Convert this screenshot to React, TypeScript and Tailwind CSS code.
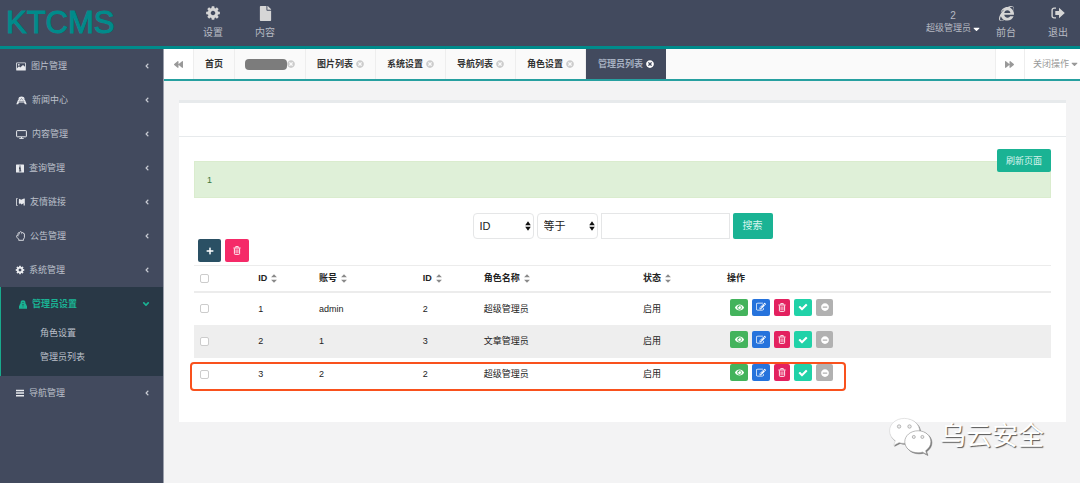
import React from "react";
import type { ReactNode } from "react";
import {
  FaAngleDown,
  FaAngleLeft,
  FaBackward,
  FaCaretDown,
  FaEye,
  FaFile,
  FaForward,
  FaInternetExplorer,
  FaMinusCircle,
  FaPlus,
  FaTimesCircle,
} from "react-icons/fa";

const COG =
  "M1152 896q0-106-75-181t-181-75-181 75-75 181 75 181 181 75 181-75 75-181zm512-109v222q0 12-8 23t-20 13l-185 28q-19 54-39 91 35 50 107 138 10 12 10 25t-9 23q-27 37-99 108t-94 71q-12 0-26-9l-138-108q-44 23-91 38-16 136-29 186-7 28-36 28h-222q-14 0-24.5-8.5t-11.5-21.5l-28-184q-49-16-90-37l-141 107q-10 9-25 9-14 0-25-11-126-114-165-168-7-10-7-23 0-12 8-23 15-21 51-66.5t54-70.5q-27-50-41-99l-183-27q-13-2-21-12.5t-8-23.5v-222q0-12 8-23t19-13l186-28q14-46 39-92-40-57-107-138-10-12-10-24 0-10 9-23 26-36 98.5-107.5t94.5-71.5q13 0 26 10l138 107q44-23 91-38 16-136 29-186 7-28 36-28h222q14 0 24.5 8.5t11.5 21.5l28 184q49 16 90 37l142-107q9-9 24-9 13 0 25 10 129 119 165 170 7 8 7 22 0 12-8 23-15 21-51 66.5t-54 70.5q26 50 41 98l183 28q13 2 21 12.5t8 23.5z";
const EDIT =
  "M888 1184l116-116-152-152-116 116v56h96v96h56zm440-720q-16-16-33 1l-350 350q-17 17-1 33t33-1l350-350q17-17 1-33zm80 594v190q0 119-84.5 203.5t-203.5 84.5h-832q-119 0-203.5-84.5t-84.500-203.5v-832q0-119 84.5-203.5t203.5-84.5h832q63 0 117 25 15 7 18 23 3 17-9 29l-49 49q-14 14-32 8-23-6-45-6h-832q-66 0-113 47t-47 113v832q0 66 47 113t113 47h832q66 0 113-47t47-113v-126q0-13 9-22l64-64q15-15 35-7t20 29zm-96-738l288 288-672 672h-288v-288zm444 132l-92 92-288-288 92-92q28-28 68-28t68 28l152 152q28 28 28 68t-28 68z";
const CHECK =
  "M1671 566q0 40-28 68l-724 724-136 136q-28 28-68 28t-68-28l-136-136-362-362q-28-28-28-68t28-68l136-136q28-28 68-28t68 28l294 295 656-657q28-28 68-28t68 28l136 136q28 28 28 68z";

function Glyph({ d, className }: { d: string; className: string }) {
  return (
    <svg viewBox="0 0 1792 1792" fill="currentColor" className={className} aria-hidden="true">
      <path d={d} />
    </svg>
  );
}

function SignOutIcon() {
  return (
    <svg viewBox="0 0 14 12" className="h-3 w-3.5" fill="none" aria-hidden="true">
      <path d="M5 1.100H3A1.900 1.900 0 0 0 1.100 3v6A1.900 1.900 0 0 0 3 10.900h2" stroke="currentColor" strokeWidth="1.400" />
      <path d="M4.300 4H8V.8L13.800 6 8 11.200V8H4.300z" fill="currentColor" />
    </svg>
  );
}

function TrashIcon() {
  return (
    <svg viewBox="0 0 8 9" className="h-[9px] w-2" aria-hidden="true">
      <path d="M2.700 1.600V.6h2.600v1M.4 2h7.200" fill="none" stroke="currentColor" strokeWidth=".9" />
      <path d="M1.400 2.400v5.200q0 .8.800.8h3.600q.8 0 .8-.8V2.400" fill="none" stroke="currentColor" strokeWidth=".9" />
      <path d="M3.100 3.400v3.800M4.900 3.400v3.800" stroke="currentColor" strokeWidth=".8" />
    </svg>
  );
}

function PictureIcon() {
  return (
    <svg viewBox="0 0 10 9" className="h-[9px] w-2.5" aria-hidden="true">
      <path fillRule="evenodd" fill="currentColor" d="M.8.500h8.400q.6 0 .6.600v6.800q0 .6-.6.600H.8q-.6 0-.6-.600V1.100Q.2.500.8.500zM1 1.300v4.900L3 4.300l1.200 1.100L7 2.900l2 1.900V1.300zM2.800 1.900a.9.900 0 1 1 0 1.800.9.900 0 0 1 0-1.800z" />
    </svg>
  );
}

function NewsIcon() {
  return (
    <svg viewBox="0 0 11 9" className="h-[9px] w-[11px]" aria-hidden="true">
      <path d="M3 1.300Q5.500-.4 8 1.300l1.200 3.200 1.500 3.700H8.900L8 6.600H3l-.9 1.600H.3l1.500-3.700z" fill="currentColor" />
      <path d="M4 4.400l1.500-2 1.500 2M2.700 5.400h5.600M2.300 3.800l.8-1M8.700 3.800l-.8-1" fill="none" stroke="#424a5e" strokeWidth=".5" />
    </svg>
  );
}

function ScreenIcon() {
  return (
    <svg viewBox="0 0 11 9" className="h-[9px] w-[11px]" fill="none" stroke="currentColor" aria-hidden="true">
      <rect x=".6" y=".6" width="9.800" height="6.200" rx=".6" />
      <path d="M5.500 7v1.200M3.300 8.400h4.400" />
    </svg>
  );
}

function InfoIcon() {
  return (
    <svg viewBox="0 0 8 9" className="h-[9px] w-2" aria-hidden="true">
      <rect y=".5" width="8" height="8" rx=".5" fill="currentColor" />
      <path d="M4 1.500v1.200M3 3.700h1.200v3.200M2.900 7h2.400" stroke="#424a5e" strokeWidth="1.100" />
    </svg>
  );
}

function LinkIcon() {
  return (
    <svg viewBox="0 0 9 8" className="h-2 w-[9px]" aria-hidden="true">
      <path d="M1.600.5H.5v7h1.100" fill="none" stroke="currentColor" strokeWidth=".8" />
      <path d="M3 .8l2.300 1L7.300.8l1.500-.4v7.100H7.600V5.300L5.400 6.400 3.900 5.100v1.400L2.800 5z" fill="currentColor" />
    </svg>
  );
}

function HandIcon() {
  return (
    <svg viewBox="0 0 9 10" className="h-2.5 w-[9px]" fill="none" stroke="currentColor" strokeWidth=".9" aria-hidden="true">
      <path d="M2.700 9.300V8.200L.9 6.300Q.4 5.600.6 4.800q.3-.8 1.500-.6V2.300q.2-.9 1.300-.7Q3.800.6 4.700.7q.8 0 1 .8 1-.3 1.300.6 1.300-.1 1.400.9v3.600L7.500 8.200v1.100z" />
      <path d="M2.100 4.200v1.300M3.400 1.800v1.600M5.700 1.600v1.600" strokeWidth=".6" />
    </svg>
  );
}

function AdminIcon() {
  return (
    <svg viewBox="0 0 8 9" className="h-[9px] w-2" fill="currentColor" aria-hidden="true">
      <path fillRule="evenodd" d="M4 .2c1.500 0 2.400.9 2.400 2v1.300l.8.600v1L8 6v2.700H0V6l.8-.9v-1l.8-.6V2.200c0-1.100.9-2 2.400-2zM3.200 2v.6h1.600V2zM3.100 4.600v.6h1.800v-.6zM3.700 6.500v.8h.6v-.8z" />
    </svg>
  );
}

function LinesIcon() {
  return (
    <svg viewBox="0 0 8 8" className="h-2 w-2" fill="currentColor" aria-hidden="true">
      <path d="M0 .7h8v1.500H0zM0 3.300h8v1.500H0zM0 5.900h8v1.500H0z" />
    </svg>
  );
}

function SortIcon() {
  return (
    <svg viewBox="0 0 6 9" className="h-[9px] w-1.5" fill="#8a8a8a" aria-hidden="true">
      <path d="M3 .2L5.900 3.300H.1zM3 8.800L.1 5.700h5.800z" />
    </svg>
  );
}

const menu: { label: string; icon: ReactNode }[] = [
  { label: "图片管理", icon: <PictureIcon /> },
  { label: "新闻中心", icon: <NewsIcon /> },
  { label: "内容管理", icon: <ScreenIcon /> },
  { label: "查询管理", icon: <InfoIcon /> },
  { label: "友情链接", icon: <LinkIcon /> },
  { label: "公告管理", icon: <HandIcon /> },
  { label: "系统管理", icon: <Glyph d={COG} className="-mx-px h-2.5 w-2.5" /> },
];

function MenuItem({ label, icon }: { label: string; icon: ReactNode }) {
  return (
    <a href="#" className="flex h-[34px] items-center gap-[5px] pr-3 pl-4 text-[#e8eaee]">
      {icon}
      <span className="flex-1 text-[#bcc0ca]">{label}</span>
      <FaAngleLeft className="h-2 w-2 text-[#c8cbd3]" />
    </a>
  );
}

function Sidebar() {
  return (
    <nav className="w-[164px] shrink-0 border-r border-[#9a9fab] bg-[#424a5e]">
      {menu.map((m) => (
        <MenuItem key={m.label} {...m} />
      ))}
      <div className="border-l border-[#19aa8d] bg-[#293846] pb-[7px]">
        <a href="#" className="flex h-[34px] items-center gap-[5px] pr-3 pl-[18px] text-[#1ab394]">
          <AdminIcon />
          <span className="flex-1 font-semibold">管理员设置</span>
          <FaAngleDown className="h-2.5 w-2.5" />
        </a>
        <a href="#" className="flex h-6 items-center pl-[39px] text-[#bcc0ca]">角色设置</a>
        <a href="#" className="flex h-6 items-center pl-[39px] text-[#bcc0ca]">管理员列表</a>
      </div>
      <MenuItem label="导航管理" icon={<LinesIcon />} />
    </nav>
  );
}

function TopLink({ label, children }: { label: string; children: ReactNode }) {
  return (
    <a href="#" className="flex h-[46px] flex-col items-center gap-1 pt-[5px] text-[10px] leading-[15px] text-[#b7bac3]">
      <span className="flex h-4 items-center text-[#d6d6d6]">{children}</span>
      {label}
    </a>
  );
}

function Header() {
  return (
    <header className="flex h-[49px] border-b-[3px] border-[#008b8b] bg-[#424a5e]">
      <a href="#" className="w-[203px] pl-1.5 text-[31px] leading-[45px] text-[#008b8b] [-webkit-text-stroke:1px_#008b8b]">KTCMS</a>
      <div className="flex flex-1 gap-8">
        <TopLink label="设置"><Glyph d={COG} className="h-4 w-4" /></TopLink>
        <TopLink label="内容"><FaFile className="h-[15px] w-[13px]" /></TopLink>
      </div>
      <div className="flex pr-3">
        <button type="button" className="mr-4 flex flex-col items-center pt-[9px] leading-[13px] text-[#b7bac3]">
          <span className="text-[10px]">2</span>
          <span className="flex items-center gap-0.5">超级管理员<FaCaretDown className="h-2.5 w-[7px] text-white" /></span>
        </button>
        <div className="flex gap-8">
          <TopLink label="前台"><FaInternetExplorer className="h-[15px] w-[15px]" /></TopLink>
          <TopLink label="退出"><SignOutIcon /></TopLink>
        </div>
      </div>
    </header>
  );
}

function Tab({ label, active = false }: { label: string; active?: boolean }) {
  return (
    <a
      href="#"
      className={
        active
          ? "flex items-center gap-[3px] bg-[#424a5e] px-3 text-[#a7b1c2]"
          : "flex items-center gap-[3px] border-r border-[#eeeeee] px-[11px] text-[#333333]"
      }
    >
      <span className="font-semibold">{label}</span>
      <FaTimesCircle className={active ? "h-2 w-2 text-white" : "h-2 w-2 text-[#cccccc]"} />
    </a>
  );
}

function TabBar() {
  return (
    <div className="flex h-8 border-b-2 border-[#26a0a0] bg-[#fafafa]">
      <button type="button" aria-label="向左" className="flex w-[30px] items-center justify-center border-r border-[#eeeeee] bg-white text-[#999999]">
        <FaBackward className="h-[9px] w-[9px]" />
      </button>
      <a href="#" className="flex items-center border-r border-[#eeeeee] px-[11px] font-semibold text-[#333333]">首页</a>
      <a href="#" aria-label="标签" className="flex items-center border-r border-[#eeeeee] px-2.5">
        <span className="h-[11px] w-[42px] rounded bg-[#7c7c7c]" />
        <FaTimesCircle className="h-2 w-2 text-[#cccccc]" />
      </a>
      <Tab label="图片列表" />
      <Tab label="系统设置" />
      <Tab label="导航列表" />
      <Tab label="角色设置" />
      <Tab label="管理员列表" active />
      <span className="flex-1" />
      <button type="button" aria-label="向右" className="flex w-[30px] items-center justify-center border-x border-[#eeeeee] bg-white text-[#999999]">
        <FaForward className="h-[9px] w-[9px]" />
      </button>
      <button type="button" className="flex items-center gap-0.5 bg-white pr-0.5 pl-2 text-[#999999]">
        关闭操作
        <FaCaretDown className="h-2.5 w-[7px]" />
      </button>
    </div>
  );
}

function Picker({ label, value }: { label: string; value: string }) {
  return (
    <div className="relative">
      <select aria-label={label} className="h-[26px] w-[61px] appearance-none rounded border border-[#e5e6e7] bg-white pl-1.5 text-[11px] text-[#222222]">
        <option>{value}</option>
      </select>
      <svg viewBox="0 0 6 10" className="pointer-events-none absolute top-2 right-[3px] h-2.5 w-1.5" fill="#111111" aria-hidden="true">
        <path d="M3 .2L5.800 4.200H.2zM3 9.800L.2 5.800h5.600z" />
      </svg>
    </div>
  );
}

const rows = [
  ["1", "admin", "2", "超级管理员", "启用"],
  ["2", "1", "3", "文章管理员", "启用"],
  ["3", "2", "2", "超级管理员", "启用"],
];

const box = "block h-[9px] w-[9px] appearance-none rounded-xs border border-[#cccccc] bg-white";

function Actions() {
  const base = "flex h-[17px] items-center justify-center rounded-xs text-white";
  return (
    <div className="flex gap-1 pb-[3px] pl-[3px]">
      <button type="button" aria-label="查看" className={`${base} w-[18px] bg-[#43b35c]`}><FaEye className="h-[9px] w-[9px]" /></button>
      <button type="button" aria-label="编辑" className={`${base} w-[18px] bg-[#2673dc]`}><Glyph d={EDIT} className="h-2.5 w-2.5" /></button>
      <button type="button" aria-label="删除" className={`${base} w-4 bg-[#e3215f]`}><TrashIcon /></button>
      <button type="button" aria-label="启用" className={`${base} w-[18px] bg-[#20d2a8]`}><Glyph d={CHECK} className="h-2.5 w-2.5" /></button>
      <button type="button" aria-label="禁用" className={`${base} w-[17px] bg-[#b1b1b1]`}><FaMinusCircle className="h-2 w-2" /></button>
    </div>
  );
}

function DataTable() {
  const heads = ["ID", "账号", "ID", "角色名称", "状态"];
  return (
    <div className="relative">
      <table className="w-full table-fixed border-collapse text-left text-[#222222]">
        <colgroup>
          <col className="w-[7.5%]" />
          <col className="w-[7.1%]" />
          <col className="w-[12.1%]" />
          <col className="w-[7.1%]" />
          <col className="w-[18.6%]" />
          <col className="w-[9.8%]" />
          <col />
        </colgroup>
        <thead>
          <tr className="h-[26px] border-t border-b-2 border-[#ececec]">
            <th className="pl-1.5"><input type="checkbox" aria-label="全选" className={box} /></th>
            {heads.map((h, i) => (
              <th key={i} className="font-bold">
                <span className="flex items-center gap-1">{h}<SortIcon /></span>
              </th>
            ))}
            <th className="font-bold">操作</th>
          </tr>
        </thead>
        <tbody>
          {rows.map((r) => (
            <tr key={r[0]} className="h-[33px] even:bg-[#eeeeee]">
              <td className="pl-1.5"><input type="checkbox" aria-label={`选择 ${r[0]}`} className={box} /></td>
              {r.map((c, i) => (
                <td key={i}>{c}</td>
              ))}
              <td><Actions /></td>
            </tr>
          ))}
        </tbody>
      </table>
      <div className="pointer-events-none absolute bottom-0 -left-1 h-[29px] w-[76.6%] rounded border-2 border-[#f9511d]" />
    </div>
  );
}

function Watermark() {
  return (
    <div className="pointer-events-none absolute right-9 bottom-7 flex items-center gap-2 text-[26px] leading-9 text-white [text-shadow:1px_1px_1px_#555555]">
      <svg viewBox="0 0 46 40" className="h-[38px] w-11 drop-shadow-[1px_1px_0_#777777]" fill="#ffffff" stroke="#d0d0d0" strokeWidth=".6" aria-hidden="true">
        <path d="M17 1.500C8 1.500 1.500 7.500 1.500 14.500c0 4.500 2.300 8 6 10.500L5.800 29.800l5.800-3c2 .6 3.700.9 5.900.9 8.500 0 15.500-6 15.500-13.200S26 1.500 17 1.500z" />
        <path d="M31.500 14.500c-8 0-14 5.200-14 11.600s6 11.600 14 11.600c1.600 0 3.200-.3 4.700-.7l4.600 2.500-1.300-4c3.400-2.300 5.500-5.600 5.500-9.400 0-6.400-5.800-11.600-13.500-11.600z" stroke="#888888" />
        <g fill="#eeeeee" stroke="#888888">
          <circle cx="11.500" cy="10" r="1.800" />
          <circle cx="22.500" cy="10" r="1.800" />
          <circle cx="27" cy="21" r="1.600" />
          <circle cx="36" cy="21" r="1.600" />
        </g>
      </svg>
      乌云安全
    </div>
  );
}

export default function App() {
  return (
    <div className="relative flex min-h-screen flex-col bg-[#f3f3f4] font-['Liberation_Sans','Noto_Sans_CJK_SC',sans-serif] text-[9px] leading-[14px]">
      <Header />
      <div className="flex flex-1">
        <Sidebar />
        <main className="min-w-0 flex-1">
          <TabBar />
          <section className="mt-[19px] mr-3.5 ml-[15px] border-t-[3px] border-[#e7eaec] bg-white">
            <div className="h-[34px] border-b border-[#e7eaec]" />
            <div className="px-[15px] pt-6 pb-[31px]">
              <div className="relative">
                <div className="h-[37px] border border-[#daecce] bg-[#dff0d8] px-3 py-[11px] text-[#3c763d]">1</div>
                <button type="button" className="absolute -top-3 right-0 h-[23px] rounded-xs bg-[#1ab394] px-[9px] text-[#d9f5ef]">刷新页面</button>
              </div>
              <form className="flex justify-center gap-[3px] pt-[15px]" onSubmit={(e) => e.preventDefault()}>
                <Picker label="字段" value="ID" />
                <Picker label="条件" value="等于" />
                <input aria-label="关键字" className="h-[26px] w-[129px] border border-[#e5e6e7] bg-white px-2 text-[11px]" />
                <button type="submit" className="h-[26px] rounded-xs bg-[#1ab394] px-2.5 text-[10px] text-[#d9f5ef]">搜索</button>
              </form>
              <div className="flex gap-1 pb-[3px] pl-1">
                <button type="button" aria-label="添加" className="flex h-[23px] w-[23px] items-center justify-center rounded-xs bg-[#2a5064] text-white"><FaPlus className="h-2 w-2" /></button>
                <button type="button" aria-label="批量删除" className="flex h-[23px] w-6 items-center justify-center rounded-xs bg-[#f52a68] text-white"><TrashIcon /></button>
              </div>
              <DataTable />
            </div>
          </section>
        </main>
      </div>
      <Watermark />
    </div>
  );
}
